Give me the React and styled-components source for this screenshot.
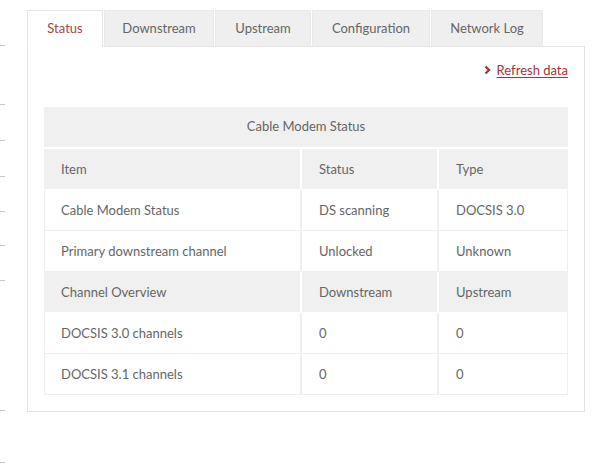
import React from "react";
import styled, { createGlobalStyle } from "styled-components";

const Global = createGlobalStyle`
  html, body { margin: 0; padding: 0; background: #fff; }
  body { font-family: Lato, "Open Sans", "Liberation Sans", sans-serif; color: #666; }
  * { box-sizing: border-box; }
`;

const Page = styled.div`
  display: flex;
  width: 600px;
  height: 470px;
  overflow: hidden;
`;

const Rail = styled.div`
  width: 27px;
  flex: none;
  display: flex;
  flex-direction: column;
  align-items: flex-start;
`;

const Tick = styled.div`
  width: 5px;
  height: 1px;
  background: #c8c8c8;
  margin-top: ${(p) => p.$gap}px;
`;

const Main = styled.div`
  width: 558px;
  padding-top: 10px;
  display: flex;
  flex-direction: column;
`;

const TabBar = styled.div`
  display: flex;
  height: 37px;
  position: relative;
  z-index: 1;
`;

const Tab = styled.div`
  width: ${(p) => p.$w}px;
  height: 37px;
  display: flex;
  align-items: center;
  justify-content: center;
  font-size: 13px;
  padding-bottom: 2px;
  color: ${(p) => (p.$active ? "#a8434a" : "#666")};
  background: ${(p) => (p.$active ? "#fff" : "#efefef")};
  border: 1px solid ${(p) => (p.$active ? "#e4e4e4" : "#e9e9e9")};
  border-bottom: ${(p) => (p.$active ? "1px solid #fff" : "1px solid #e4e4e4")};
  margin-right: 1px;
`;

const Panel = styled.div`
  margin-top: -1px;
  border: 1px solid #e4e4e4;
  padding: 14px 16px 16px 16px;
  display: flex;
  flex-direction: column;
`;

const RefreshRow = styled.div`
  display: flex;
  justify-content: flex-end;
  height: 18px;
  margin-bottom: 28px;
`;

const RefreshLink = styled.a`
  display: flex;
  align-items: center;
  gap: 6px;
  font-size: 13px;
  color: #a3343b;
  text-decoration: underline;
  text-underline-offset: 2px;
  cursor: pointer;
`;

const Table = styled.div`
  display: grid;
  grid-template-columns: 258px 137px 1fr;
`;

const Title = styled.div`
  grid-column: 1 / -1;
  height: 42px;
  padding-bottom: 2px;
  background: #f0f0f0;
  border-bottom: 2px solid #fff;
  display: flex;
  align-items: center;
  justify-content: center;
  font-size: 13px;
`;

const Cell = styled.div`
  height: 41px;
  display: flex;
  align-items: center;
  padding-left: 16px;
  padding-bottom: 1px;
  font-size: 13px;
  color: #666;
  background: ${(p) => (p.$shade ? "#f0f0f0" : "#fff")};
  border-bottom: 1px solid ${(p) => (p.$shade ? "#fff" : "#efefef")};
  border-right: ${(p) => (p.$last ? "1px solid #efefef" : `2px solid ${p.$shade ? "#fff" : "#efefef"}`)};
  border-left: ${(p) => (p.$first && !p.$shade ? "1px solid #efefef" : "1px solid transparent")};
  ${(p) => p.$first && p.$shade && "border-left: 1px solid #f0f0f0;"}
  ${(p) => p.$last && p.$shade && "border-right: 1px solid #f0f0f0;"}
`;

const Chevron = () => (
  <svg width="7" height="10" viewBox="0 0 7 10">
    <path d="M1.5 1.5 L5 5 L1.5 8.5" fill="none" stroke="#a3343b" strokeWidth="2.4" />
  </svg>
);

const tabs = [
  { label: "Status", w: 76, active: true },
  { label: "Downstream", w: 110 },
  { label: "Upstream", w: 96 },
  { label: "Configuration", w: 118 },
  { label: "Network Log", w: 112 },
];

const rows = [
  { shade: true, cells: ["Item", "Status", "Type"] },
  { cells: ["Cable Modem Status", "DS scanning", "DOCSIS 3.0"] },
  { cells: ["Primary downstream channel", "Unlocked", "Unknown"] },
  { shade: true, cells: ["Channel Overview", "Downstream", "Upstream"] },
  { cells: ["DOCSIS 3.0 channels", "0", "0"] },
  { cells: ["DOCSIS 3.1 channels", "0", "0"] },
];

const ticks = [45, 104, 140, 176, 211, 245, 280, 410, 462];

export default function App() {
  return (
    <Page>
      <Global />
      <Rail>
        {ticks.map((t, i) => (
          <Tick key={i} $gap={i === 0 ? t : t - ticks[i - 1] - 1} />
        ))}
      </Rail>
      <Main>
        <TabBar>
          {tabs.map((t) => (
            <Tab key={t.label} $w={t.w} $active={t.active}>
              {t.label}
            </Tab>
          ))}
        </TabBar>
        <Panel>
          <RefreshRow>
            <RefreshLink>
              <Chevron />
              Refresh data
            </RefreshLink>
          </RefreshRow>
          <Table>
            <Title>Cable Modem Status</Title>
            {rows.map((r, ri) =>
              r.cells.map((c, ci) => (
                <Cell
                  key={`${ri}-${ci}`}
                  $shade={r.shade}
                  $first={ci === 0}
                  $last={ci === 2}
                >
                  {c}
                </Cell>
              ))
            )}
          </Table>
        </Panel>
      </Main>
    </Page>
  );
}
